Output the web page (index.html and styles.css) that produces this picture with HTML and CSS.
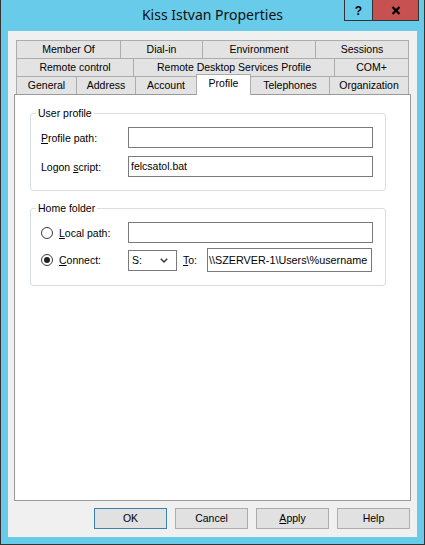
FILE: index.html
```html
<!DOCTYPE html>
<html>
<head>
<meta charset="utf-8">
<title>Kiss Istvan Properties</title>
<link rel="stylesheet" href="styles.css">
</head>
<body>
<div class="window">
  <div class="titlebar">
    <div class="title">Kiss Istvan Properties</div>
    <div class="caption">
      <div class="cap help">?</div>
      <div class="cap close">
        <svg width="10" height="9" viewBox="0 0 10 9"><path d="M1.5 1 L8.5 8 M8.5 1 L1.5 8" stroke="#000" stroke-width="2.2" fill="none"/></svg>
      </div>
    </div>
  </div>
  <div class="client">
    <div class="tabs">
      <div class="tabrow">
        <div class="tab t-member">Member Of</div>
        <div class="tab t-dialin">Dial-in</div>
        <div class="tab t-env">Environment</div>
        <div class="tab t-sessions">Sessions</div>
      </div>
      <div class="tabrow">
        <div class="tab t-remote">Remote control</div>
        <div class="tab t-rdsp">Remote Desktop Services Profile</div>
        <div class="tab t-com">COM+</div>
      </div>
      <div class="tabrow front">
        <div class="tab t-general">General</div>
        <div class="tab t-address">Address</div>
        <div class="tab t-account">Account</div>
        <div class="tab t-profile sel">Profile</div>
        <div class="tab t-phones">Telephones</div>
        <div class="tab t-org">Organization</div>
      </div>
    </div>
    <div class="panel">
      <fieldset class="group">
        <legend>User profile</legend>
        <div class="row">
          <span class="lbl"><span><u>P</u>rofile path:</span></span>
          <div class="field wide"></div>
        </div>
        <div class="row">
          <span class="lbl"><span>Logon <u>s</u>cript:</span></span>
          <div class="field wide">felcsatol.bat</div>
        </div>
      </fieldset>
      <fieldset class="group home">
        <legend>Home folder</legend>
        <div class="row">
          <span class="lbl"><span class="radio"></span><span><u>L</u>ocal path:</span></span>
          <div class="field wide"></div>
        </div>
        <div class="row tall">
          <span class="lbl"><span class="radio on"></span><span><u>C</u>onnect:</span></span>
          <div class="combo">
            <span>S:</span>
            <svg width="8" height="5" viewBox="0 0 8 5"><path d="M0.8 0.8 L4 4 L7.2 0.8" stroke="#333" stroke-width="1.4" fill="none"/></svg>
          </div>
          <span class="to"><u>T</u>o:</span>
          <div class="field path">\\SZERVER-1\Users\%username</div>
        </div>
      </fieldset>
    </div>
    <div class="buttons">
      <div class="btn default">OK</div>
      <div class="btn">Cancel</div>
      <div class="btn"><u>A</u>pply</div>
      <div class="btn">Help</div>
    </div>
  </div>
</div>
</body>
</html>
```
FILE: styles.css
```css
* { box-sizing: border-box; }
html, body { margin: 0; padding: 0; }
body {
  width: 425px;
  height: 545px;
  overflow: hidden;
  font-family: "Liberation Sans", Arial, sans-serif;
  font-size: 10.5px;
  color: #000;
  background: #69cbea;
}
.window {
  width: 425px;
  height: 545px;
  background: #69cbea;
  border: 1px solid #333;
  border-top: 0;
  padding: 0 7px 7px;
  display: flex;
  flex-direction: column;
}
.titlebar {
  height: 31px;
  flex: none;
  position: relative;
}
.title {
  text-align: center;
  font-family: "Noto Sans", "Open Sans", sans-serif;
  font-size: 14px;
  line-height: 29px;
  color: #111;
}
.caption {
  position: absolute;
  top: 0;
  right: -2px;
  display: flex;
  height: 21px;
  border: 1px solid #333;
  border-top: 0;
}
.cap {
  display: flex;
  align-items: center;
  justify-content: center;
}
.help {
  width: 28px;
  border-right: 1px solid #333;
  font-weight: bold;
  font-size: 12px;
  padding-top: 1px;
}
.close {
  width: 45px;
  background: #c75050;
}
.client {
  flex: 1;
  background: #f0f0f0;
  padding: 9px 6px 0 6px;
  display: flex;
  flex-direction: column;
}
.tabs { margin: 0 2px; flex: none; }
.tabrow { display: flex; height: 18px; }
.tabrow.front { align-items: flex-end; position: relative; z-index: 1; }
.tab {
  height: 18px;
  border-top: 1px solid #acacac;
  border-left: 1px solid #acacac;
  background: #e3e3e3;
  text-align: center;
  line-height: 17px;
  white-space: nowrap;
}
.tab:last-child { border-right: 1px solid #acacac; }
.tab.sel {
  height: 21px;
  margin-bottom: -1px;
  background: #fff;
  border-right: 1px solid #acacac;
}
.tab.sel + .tab { border-left: 0; }
.t-member { width: 104px; }
.t-dialin { width: 82px; }
.t-env { width: 113px; }
.t-sessions { width: 94px; }
.t-remote { width: 117px; }
.t-rdsp { width: 201px; }
.t-com { width: 75px; }
.t-general { width: 60px; }
.t-address { width: 59px; }
.t-account { width: 61px; }
.t-profile { width: 55px; }
.t-phones { width: 78px; }
.t-org { width: 80px; }

.panel {
  flex: 1;
  background: #fff;
  border: 1px solid #9a9a9a;
  padding: 0 24px 0 15px;
}
.group {
  margin: 12px 0 0;
  padding: 7px 12px 13px 10px;
  border: 1px solid #d5dfe5;
  border-radius: 3px;
  min-width: 0;
}
.group.home { margin-top: 11px; }
legend {
  padding: 0 2px;
  margin-left: -5px;
  line-height: 13px;
}
.row {
  display: flex;
  align-items: center;
  height: 21px;
}
.row + .row { margin-top: 8px; }
.row.tall { height: 24px; margin-top: 5px; }
.lbl {
  width: 87px;
  flex: none;
  display: flex;
  align-items: center;
  white-space: nowrap;
}
.field {
  height: 21px;
  border: 1px solid #7a7a7a;
  background: #fff;
  padding: 0 2px;
  line-height: 19px;
  white-space: nowrap;
  overflow: hidden;
  flex: none;
}
.field.wide { width: 245px; }
.field.path {
  width: 165px;
  height: 24px;
  line-height: 22px;
  font-size: 10.8px;
  padding: 0 1px;
}
.radio {
  width: 12px;
  height: 12px;
  border: 1px solid #3c3c3c;
  border-radius: 50%;
  background: #fff;
  margin-right: 6px;
  display: flex;
  align-items: center;
  justify-content: center;
  flex: none;
}
.radio.on::after {
  content: "";
  width: 6px;
  height: 6px;
  border-radius: 50%;
  background: #222;
}
.combo {
  width: 49px;
  height: 21px;
  border: 1px solid #7a7a7a;
  background: #fff;
  display: flex;
  align-items: center;
  justify-content: space-between;
  padding: 0 8px 0 3px;
  flex: none;
}
.to {
  width: 30px;
  padding-left: 6px;
  flex: none;
}
.buttons {
  flex: none;
  display: flex;
  justify-content: flex-end;
  gap: 8px;
  margin: 7px 1px 8px 0;
}
.btn {
  width: 73px;
  height: 21px;
  border: 1px solid #adadad;
  background: #e1e1e1;
  text-align: center;
  line-height: 19px;
}
.btn.default { border-color: #3c7fb1; }
```
